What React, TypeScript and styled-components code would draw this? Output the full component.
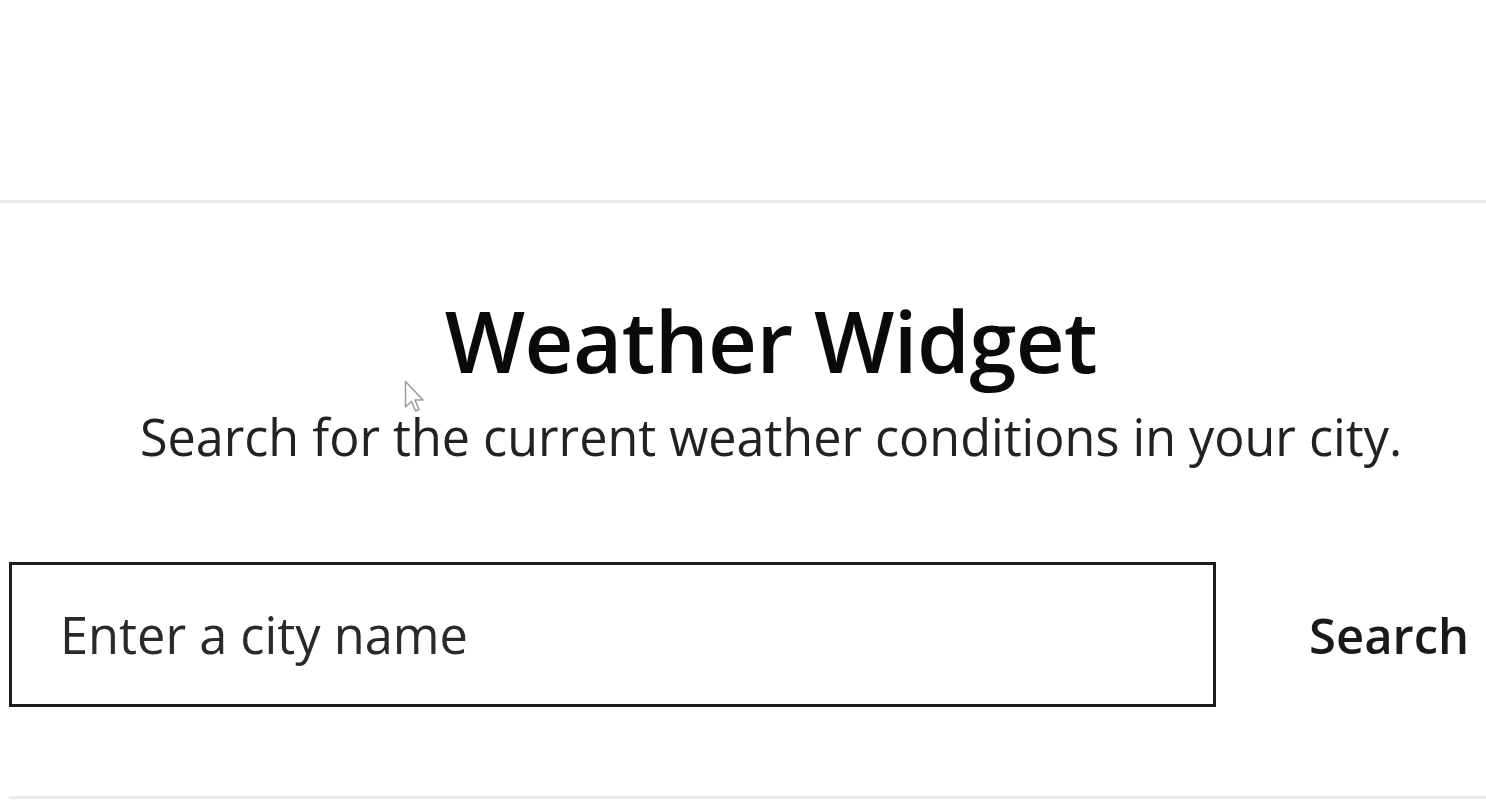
import { useState } from 'react';
import styled, { createGlobalStyle } from 'styled-components';

const GlobalStyle = createGlobalStyle`
  html, body {
    margin: 0;
    padding: 0;
    background: #ffffff;
    overflow: hidden;
  }
  body {
    font-family: 'Open Sans', 'Noto Sans', sans-serif;
    color: #111;
  }
`;

const Page = styled.div`
  position: relative;
  width: 1486px;
  height: 811px;
  overflow: hidden;
`;

const TopBar = styled.header`
  height: 200px;
  border-bottom: 3px solid #ebebeb;
`;

const Section = styled.main`
  width: 1524px;
  margin-left: 9px;
  padding-top: 86px;
  height: 596px;
  box-sizing: border-box;
  border-bottom: 3px solid #ebebeb;
`;

const Title = styled.h1`
  margin: 0;
  text-align: center;
  font-size: 85px;
  font-weight: 600;
  line-height: 1.2;
  letter-spacing: -0.6px;
  color: #0a0a0a;
`;

const Subtitle = styled.p`
  margin: 13px 0 0;
  text-align: center;
  font-size: 50.3px;
  font-weight: 400;
  line-height: 1.3;
  color: #222;
`;

const Form = styled.form`
  display: flex;
  align-items: center;
  margin-top: 93px;
`;

const CityInput = styled.input`
  width: 1207px;
  height: 145px;
  box-sizing: border-box;
  border: 3px solid #1c1c1c;
  padding: 0 48px;
  font-family: inherit;
  font-size: 50.5px;
  color: #222;
  outline: none;
  &::placeholder {
    color: #2a2a2a;
  }
`;

const SearchButton = styled.button`
  border: none;
  background: transparent;
  padding: 0 0 0 93px;
  font-family: inherit;
  font-size: 49px;
  font-weight: 600;
  color: #1a1a1a;
  cursor: pointer;
`;

const Pointer = styled.svg`
  position: absolute;
  left: 404px;
  top: 380px;
  width: 24px;
  height: 36px;
`;

export default function App() {
  const [city, setCity] = useState('');
  return (
    <>
      <GlobalStyle />
      <Page>
        <TopBar />
        <Section>
          <Title>Weather Widget</Title>
          <Subtitle>Search for the current weather conditions in your city.</Subtitle>
          <Form onSubmit={e => e.preventDefault()}>
            <CityInput
              value={city}
              onChange={e => setCity(e.target.value)}
              placeholder="Enter a city name"
            />
            <SearchButton type="submit">Search</SearchButton>
          </Form>
        </Section>
        <Pointer viewBox="0 0 24 36">
          <path
            d="M1.5 1.5 L1.5 27 L7.5 21.5 L11.5 31 L15 29.5 L11 20 L19 20 Z"
            fill="#fff"
            stroke="#9a9a9a"
            strokeWidth="1.5"
            strokeLinejoin="round"
          />
        </Pointer>
      </Page>
    </>
  );
}
